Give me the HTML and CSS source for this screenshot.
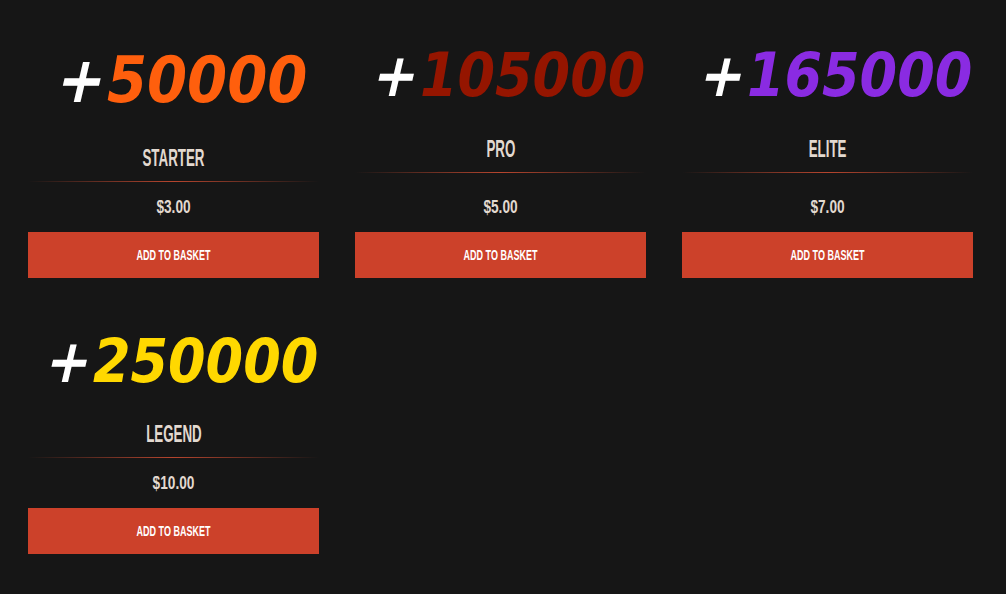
FILE: index.html
```html
<!DOCTYPE html>
<html lang="en">
<head>
<meta charset="utf-8">
<title>Store</title>
<link rel="stylesheet" href="styles.css">
</head>
<body>
<main class="grid">
  <section class="card card-starter">
    <div class="amount"><span class="plus">+</span><span class="num num-orange">50000</span></div>
    <h3 class="title"><span>STARTER</span></h3>
    <div class="divider"></div>
    <div class="price"><span>$3.00</span></div>
    <button class="btn"><span>ADD TO BASKET</span></button>
  </section>
  <section class="card card-pro">
    <div class="amount"><span class="plus">+</span><span class="num num-red">105000</span></div>
    <h3 class="title"><span>PRO</span></h3>
    <div class="divider"></div>
    <div class="price"><span>$5.00</span></div>
    <button class="btn"><span>ADD TO BASKET</span></button>
  </section>
  <section class="card card-elite">
    <div class="amount"><span class="plus">+</span><span class="num num-purple">165000</span></div>
    <h3 class="title"><span>ELITE</span></h3>
    <div class="divider"></div>
    <div class="price"><span>$7.00</span></div>
    <button class="btn"><span>ADD TO BASKET</span></button>
  </section>
  <section class="card card-legend">
    <div class="amount"><span class="plus">+</span><span class="num num-yellow">250000</span></div>
    <h3 class="title"><span>LEGEND</span></h3>
    <div class="divider"></div>
    <div class="price"><span>$10.00</span></div>
    <button class="btn"><span>ADD TO BASKET</span></button>
  </section>
</main>
</body>
</html>
```

FILE: styles.css
```css
html, body {
  margin: 0;
  padding: 0;
  background: #161616;
  height: 100%;
}
body {
  font-family: "Liberation Sans", Arial, sans-serif;
  overflow: hidden;
}
.grid {
  display: grid;
  grid-template-columns: repeat(3, 291px);
  column-gap: 36px;
  row-gap: 18px;
  padding: 20px 0 0 28px;
}
.card {
  display: flex;
  flex-direction: column;
  height: 258px;
}
.amount {
  display: flex;
  justify-content: center;
  font-family: "DejaVu Sans Condensed", "DejaVu Sans", sans-serif;
  font-weight: bold;
  font-style: italic;
  font-size: 60px;
  line-height: 62px;
  height: 62px;
  margin-top: 24px;
  margin-left: 18px;
  white-space: nowrap;
}
.plus {
  color: #ffffff;
  display: inline-block;
  transform: skewX(-13deg);
  margin-right: 1px;
}
.num-orange { color: #ff5f0d; }
.num-red { color: #951500; }
.num-purple { color: #8a2be2; }
.num-yellow { color: #ffd800; }

.card-starter .amount { font-size: 64px; margin-top: 29px; }
.card-legend .amount { margin-top: 34px; }

.title {
  margin: 31px 0 0;
  display: flex;
  justify-content: center;
  color: #e2d9d0;
  font-weight: bold;
  font-size: 23px;
  line-height: 24px;
  height: 24px;
}
.title span, .price span, .btn span {
  display: inline-block;
  transform: scaleX(0.58);
}
.price span { transform: scaleX(0.76); }
.card-starter .title { margin-top: 35px; }
.card-legend .title { margin-top: 30px; }

.divider {
  height: 1px;
  margin-top: 11px;
  background: linear-gradient(90deg, rgba(200,74,48,0) 0%, rgba(200,74,48,0.9) 50%, rgba(200,74,48,0) 100%);
}
.price {
  display: flex;
  justify-content: center;
  color: #e2d9d0;
  font-weight: bold;
  font-size: 18px;
  line-height: 20px;
  height: 20px;
  margin-top: auto;
}
.btn {
  margin-top: 15px;
  height: 46px;
  border: 0;
  padding: 0 0 2px;
  background: #cc412a;
  color: #ffffff;
  font-family: "Liberation Sans", Arial, sans-serif;
  font-weight: bold;
  font-size: 15px;
  display: flex;
  align-items: center;
  justify-content: center;
}
.btn span { transform: scaleX(0.6); }
```
